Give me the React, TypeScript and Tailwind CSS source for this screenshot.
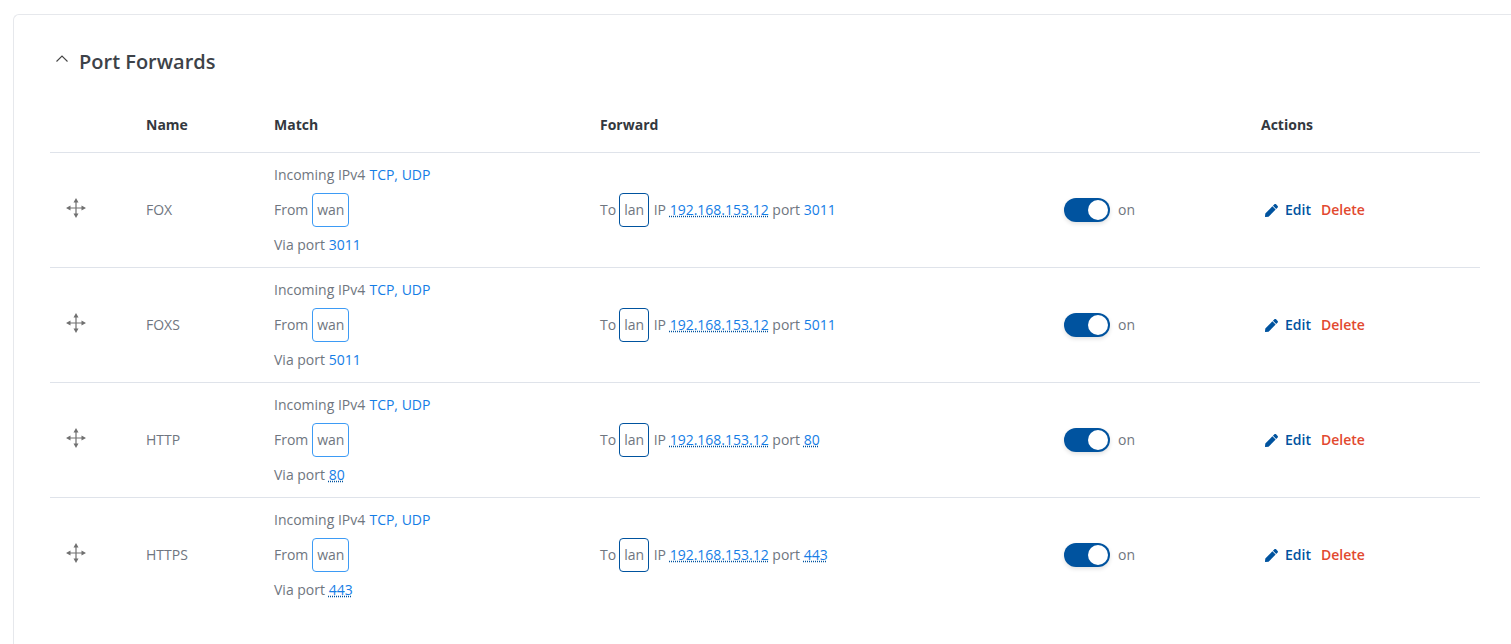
import { FaPen } from "react-icons/fa";

type PortForward = {
  name: string;
  port: string;
  dotted: boolean;
};

const rows: PortForward[] = [
  { name: "FOX", port: "3011", dotted: false },
  { name: "FOXS", port: "5011", dotted: false },
  { name: "HTTP", port: "80", dotted: true },
  { name: "HTTPS", port: "443", dotted: true },
];

function MoveIcon() {
  return (
    <svg width="20" height="20" viewBox="0 0 20 20" className="mb-[2px] text-[#707070]">
      <path d="M10 3v14M3 10h14" stroke="currentColor" strokeWidth="1.2" fill="none" />
      <path d="M10 0 12.5 4.5h-5zM10 20 7.5 15.5h5zM0 10 4.5 7.5v5zM20 10 15.5 12.5v-5z" fill="currentColor" />
    </svg>
  );
}

function Port({ value, dotted }: { value: string; dotted: boolean }) {
  return (
    <span className={dotted ? "text-[#157de6] underline decoration-dotted decoration-[#00539f]" : "text-[#157de6]"}>
      {value}
    </span>
  );
}

function Row({ row, last }: { row: PortForward; last: boolean }) {
  return (
    <div className={`flex h-[115px] items-center border-b pb-[2px] ${last ? "border-transparent" : "border-[#dfe3ea]"}`}>
      <div className="flex w-[96px] shrink-0 pl-4">
        <MoveIcon />
      </div>
      <div className="w-[128px] shrink-0">{row.name}</div>
      <div className="flex w-[326px] shrink-0 flex-col">
        <div className="flex h-[35px] items-center">
          <span>
            Incoming IPv4 <span className="ml-[0.5px] text-[#157de6]">TCP, UDP</span>
          </span>
        </div>
        <div className="flex h-[35px] items-center gap-1">
          From
          <span className="mt-[2px] flex h-[34px] w-[37px] items-center justify-center rounded-[4px] border border-[#3d9bf5] pb-[2px]">
            wan
          </span>
        </div>
        <div className="flex h-[35px] items-center">
          <span>
            Via port <Port value={row.port} dotted={row.dotted} />
          </span>
        </div>
      </div>
      <div className="flex w-[464px] shrink-0 items-center">
        To
        <span className="mt-[2px] ml-[3px] flex h-[34px] w-[30px] items-center justify-center rounded-[4px] border border-[#00539f] pb-[2px]">
          lan
        </span>
        <span className="ml-[4.5px]">
          IP{" "}
          <span className="text-[#157de6] underline decoration-dotted decoration-[#00539f]">192.168.153.12</span> port{" "}
          <Port value={row.port} dotted={row.dotted} />
        </span>
      </div>
      <div className="flex w-[197px] shrink-0 items-center gap-2">
        <span className="mt-[2px] flex h-6 w-[46px] items-center justify-end rounded-full bg-[#00539f] pr-[2px] shadow-[0_2px_4px_rgba(0,0,0,0.12)]">
          <span className="h-5 w-5 rounded-full bg-white" />
        </span>
        on
      </div>
      <div className="flex items-center pl-[4px] font-semibold">
        <FaPen className="mt-[2px] mr-[7px] text-[13px] text-[#00539f]" />
        <span className="text-[#00539f]">Edit</span>
        <span className="ml-[10px] text-[#e2492f]">Delete</span>
      </div>
    </div>
  );
}

export default function App() {
  return (
    <div className="h-[644px] w-[1511px] overflow-hidden bg-white pt-[14px] pl-[13px] font-['Open_Sans',sans-serif] text-[14px] text-[#6f7680]">
      <div className="h-[700px] rounded-tl-[6px] border-t border-l border-[#e6e8ec] pr-[31px] pl-[36px]">
        <div className="flex h-[93px] items-center pl-[6px]">
          <svg width="12" height="7" viewBox="0 0 12 7" fill="none" className="mb-[6px] text-[#444444]">
            <path d="M0.5 6.5 6 1l5.5 5.5" stroke="currentColor" strokeWidth="1.1" />
          </svg>
          <h2 className="ml-[11px] text-[20px] font-semibold text-[#3d4248]">Port Forwards</h2>
        </div>
        <div className="flex h-[45px] items-center border-b border-[#dfe3ea] pb-[12px] font-bold text-[#33383e]">
          <div className="w-[96px] shrink-0" />
          <div className="w-[128px] shrink-0">Name</div>
          <div className="w-[326px] shrink-0">Match</div>
          <div className="w-[661px] shrink-0">Forward</div>
          <div>Actions</div>
        </div>
        {rows.map((row, i) => (
          <Row key={row.name} row={row} last={i === rows.length - 1} />
        ))}
      </div>
    </div>
  );
}
